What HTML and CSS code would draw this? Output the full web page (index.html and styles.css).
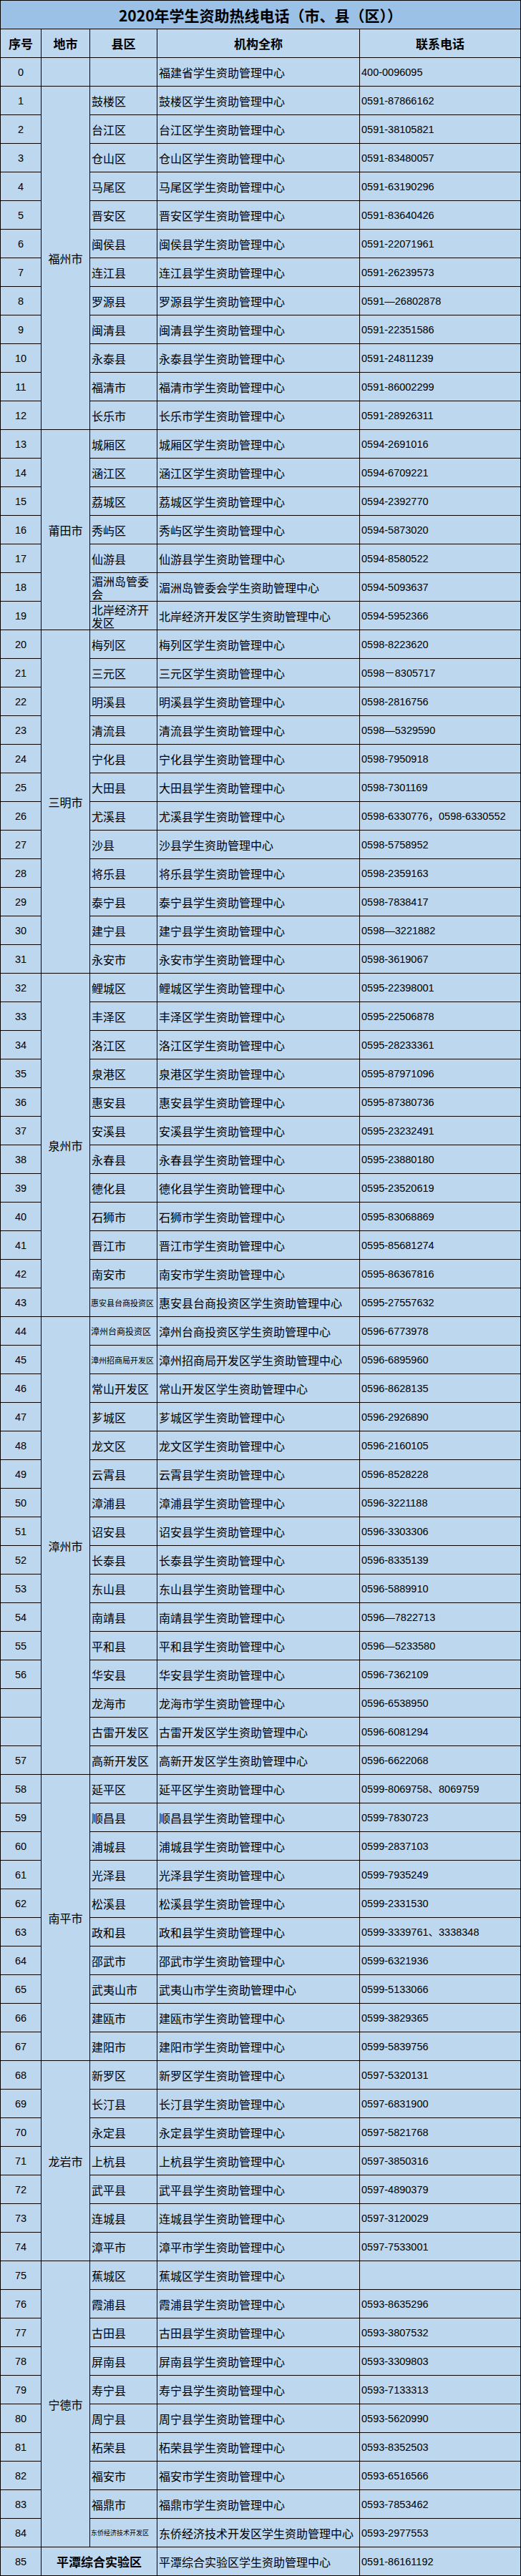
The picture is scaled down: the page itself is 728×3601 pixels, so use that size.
FILE: index.html
```html
<!DOCTYPE html>
<html lang="zh-CN">
<head>
<meta charset="utf-8">
<title>2020年学生资助热线电话</title>
<link rel="stylesheet" href="styles.css">
</head>
<body>
<table class="sheet">
<colgroup>
<col class="w-seq"><col class="w-city"><col class="w-cty"><col class="w-org"><col class="w-tel">
</colgroup>
<thead>
<tr><th colspan="5" class="title">2020年学生资助热线电话（市、县（区））</th></tr>
<tr><th class="head">序号</th><th class="head">地市</th><th class="head">县区</th><th class="head">机构全称</th><th class="head">联系电话</th></tr>
</thead>
<tbody>
<tr><td class="n">0</td><td class="city"></td><td class="cty"></td><td class="org">福建省学生资助管理中心</td><td class="tel">400-0096095</td></tr>

<tr><td class="n">1</td><td class="city" rowspan="12">福州市</td><td class="cty">鼓楼区</td><td class="org">鼓楼区学生资助管理中心</td><td class="tel">0591-87866162</td></tr>
<tr><td class="n">2</td><td class="cty">台江区</td><td class="org">台江区学生资助管理中心</td><td class="tel">0591-38105821</td></tr>
<tr><td class="n">3</td><td class="cty">仓山区</td><td class="org">仓山区学生资助管理中心</td><td class="tel">0591-83480057</td></tr>
<tr><td class="n">4</td><td class="cty">马尾区</td><td class="org">马尾区学生资助管理中心</td><td class="tel">0591-63190296</td></tr>
<tr><td class="n">5</td><td class="cty">晋安区</td><td class="org">晋安区学生资助管理中心</td><td class="tel">0591-83640426</td></tr>
<tr><td class="n">6</td><td class="cty">闽侯县</td><td class="org">闽侯县学生资助管理中心</td><td class="tel">0591-22071961</td></tr>
<tr><td class="n">7</td><td class="cty">连江县</td><td class="org">连江县学生资助管理中心</td><td class="tel">0591-26239573</td></tr>
<tr><td class="n">8</td><td class="cty">罗源县</td><td class="org">罗源县学生资助管理中心</td><td class="tel">0591—26802878</td></tr>
<tr><td class="n">9</td><td class="cty">闽清县</td><td class="org">闽清县学生资助管理中心</td><td class="tel">0591-22351586</td></tr>
<tr><td class="n">10</td><td class="cty">永泰县</td><td class="org">永泰县学生资助管理中心</td><td class="tel">0591-24811239</td></tr>
<tr><td class="n">11</td><td class="cty">福清市</td><td class="org">福清市学生资助管理中心</td><td class="tel">0591-86002299</td></tr>
<tr><td class="n">12</td><td class="cty">长乐市</td><td class="org">长乐市学生资助管理中心</td><td class="tel">0591-28926311</td></tr>

<tr><td class="n">13</td><td class="city" rowspan="7">莆田市</td><td class="cty">城厢区</td><td class="org">城厢区学生资助管理中心</td><td class="tel">0594-2691016</td></tr>
<tr><td class="n">14</td><td class="cty">涵江区</td><td class="org">涵江区学生资助管理中心</td><td class="tel">0594-6709221</td></tr>
<tr><td class="n">15</td><td class="cty">荔城区</td><td class="org">荔城区学生资助管理中心</td><td class="tel">0594-2392770</td></tr>
<tr><td class="n">16</td><td class="cty">秀屿区</td><td class="org">秀屿区学生资助管理中心</td><td class="tel">0594-5873020</td></tr>
<tr><td class="n">17</td><td class="cty">仙游县</td><td class="org">仙游县学生资助管理中心</td><td class="tel">0594-8580522</td></tr>
<tr><td class="n">18</td><td class="cty">湄洲岛管委会</td><td class="org">湄洲岛管委会学生资助管理中心</td><td class="tel">0594-5093637</td></tr>
<tr><td class="n">19</td><td class="cty">北岸经济开发区</td><td class="org">北岸经济开发区学生资助管理中心</td><td class="tel">0594-5952366</td></tr>

<tr><td class="n">20</td><td class="city" rowspan="12">三明市</td><td class="cty">梅列区</td><td class="org">梅列区学生资助管理中心</td><td class="tel">0598-8223620</td></tr>
<tr><td class="n">21</td><td class="cty">三元区</td><td class="org">三元区学生资助管理中心</td><td class="tel">0598－8305717</td></tr>
<tr><td class="n">22</td><td class="cty">明溪县</td><td class="org">明溪县学生资助管理中心</td><td class="tel">0598-2816756</td></tr>
<tr><td class="n">23</td><td class="cty">清流县</td><td class="org">清流县学生资助管理中心</td><td class="tel">0598—5329590</td></tr>
<tr><td class="n">24</td><td class="cty">宁化县</td><td class="org">宁化县学生资助管理中心</td><td class="tel">0598-7950918</td></tr>
<tr><td class="n">25</td><td class="cty">大田县</td><td class="org">大田县学生资助管理中心</td><td class="tel">0598-7301169</td></tr>
<tr><td class="n">26</td><td class="cty">尤溪县</td><td class="org">尤溪县学生资助管理中心</td><td class="tel">0598-6330776，0598-6330552</td></tr>
<tr><td class="n">27</td><td class="cty">沙县</td><td class="org">沙县学生资助管理中心</td><td class="tel">0598-5758952</td></tr>
<tr><td class="n">28</td><td class="cty">将乐县</td><td class="org">将乐县学生资助管理中心</td><td class="tel">0598-2359163</td></tr>
<tr><td class="n">29</td><td class="cty">泰宁县</td><td class="org">泰宁县学生资助管理中心</td><td class="tel">0598-7838417</td></tr>
<tr><td class="n">30</td><td class="cty">建宁县</td><td class="org">建宁县学生资助管理中心</td><td class="tel">0598—3221882</td></tr>
<tr><td class="n">31</td><td class="cty">永安市</td><td class="org">永安市学生资助管理中心</td><td class="tel">0598-3619067</td></tr>

<tr><td class="n">32</td><td class="city" rowspan="12">泉州市</td><td class="cty">鲤城区</td><td class="org">鲤城区学生资助管理中心</td><td class="tel">0595-22398001</td></tr>
<tr><td class="n">33</td><td class="cty">丰泽区</td><td class="org">丰泽区学生资助管理中心</td><td class="tel">0595-22506878</td></tr>
<tr><td class="n">34</td><td class="cty">洛江区</td><td class="org">洛江区学生资助管理中心</td><td class="tel">0595-28233361</td></tr>
<tr><td class="n">35</td><td class="cty">泉港区</td><td class="org">泉港区学生资助管理中心</td><td class="tel">0595-87971096</td></tr>
<tr><td class="n">36</td><td class="cty">惠安县</td><td class="org">惠安县学生资助管理中心</td><td class="tel">0595-87380736</td></tr>
<tr><td class="n">37</td><td class="cty">安溪县</td><td class="org">安溪县学生资助管理中心</td><td class="tel">0595-23232491</td></tr>
<tr><td class="n">38</td><td class="cty">永春县</td><td class="org">永春县学生资助管理中心</td><td class="tel">0595-23880180</td></tr>
<tr><td class="n">39</td><td class="cty">德化县</td><td class="org">德化县学生资助管理中心</td><td class="tel">0595-23520619</td></tr>
<tr><td class="n">40</td><td class="cty">石狮市</td><td class="org">石狮市学生资助管理中心</td><td class="tel">0595-83068869</td></tr>
<tr><td class="n">41</td><td class="cty">晋江市</td><td class="org">晋江市学生资助管理中心</td><td class="tel">0595-85681274</td></tr>
<tr><td class="n">42</td><td class="cty">南安市</td><td class="org">南安市学生资助管理中心</td><td class="tel">0595-86367816</td></tr>
<tr><td class="n">43</td><td class="cty fs11">惠安县台商投资区</td><td class="org">惠安县台商投资区学生资助管理中心</td><td class="tel">0595-27557632</td></tr>

<tr><td class="n">44</td><td class="city" rowspan="16">漳州市</td><td class="cty fs12">漳州台商投资区</td><td class="org">漳州台商投资区学生资助管理中心</td><td class="tel">0596-6773978</td></tr>
<tr><td class="n">45</td><td class="cty fs11">漳州招商局开发区</td><td class="org">漳州招商局开发区学生资助管理中心</td><td class="tel">0596-6895960</td></tr>
<tr><td class="n">46</td><td class="cty">常山开发区</td><td class="org">常山开发区学生资助管理中心</td><td class="tel">0596-8628135</td></tr>
<tr><td class="n">47</td><td class="cty">芗城区</td><td class="org">芗城区学生资助管理中心</td><td class="tel">0596-2926890</td></tr>
<tr><td class="n">48</td><td class="cty">龙文区</td><td class="org">龙文区学生资助管理中心</td><td class="tel">0596-2160105</td></tr>
<tr><td class="n">49</td><td class="cty">云霄县</td><td class="org">云霄县学生资助管理中心</td><td class="tel">0596-8528228</td></tr>
<tr><td class="n">50</td><td class="cty">漳浦县</td><td class="org">漳浦县学生资助管理中心</td><td class="tel">0596-3221188</td></tr>
<tr><td class="n">51</td><td class="cty">诏安县</td><td class="org">诏安县学生资助管理中心</td><td class="tel">0596-3303306</td></tr>
<tr><td class="n">52</td><td class="cty">长泰县</td><td class="org">长泰县学生资助管理中心</td><td class="tel">0596-8335139</td></tr>
<tr><td class="n">53</td><td class="cty">东山县</td><td class="org">东山县学生资助管理中心</td><td class="tel">0596-5889910</td></tr>
<tr><td class="n">54</td><td class="cty">南靖县</td><td class="org">南靖县学生资助管理中心</td><td class="tel">0596—7822713</td></tr>
<tr><td class="n">55</td><td class="cty">平和县</td><td class="org">平和县学生资助管理中心</td><td class="tel">0596—5233580</td></tr>
<tr><td class="n">56</td><td class="cty">华安县</td><td class="org">华安县学生资助管理中心</td><td class="tel">0596-7362109</td></tr>
<tr><td class="n"></td><td class="cty">龙海市</td><td class="org">龙海市学生资助管理中心</td><td class="tel">0596-6538950</td></tr>
<tr><td class="n"></td><td class="cty">古雷开发区</td><td class="org">古雷开发区学生资助管理中心</td><td class="tel">0596-6081294</td></tr>
<tr><td class="n">57</td><td class="cty">高新开发区</td><td class="org">高新开发区学生资助管理中心</td><td class="tel">0596-6622068</td></tr>

<tr><td class="n">58</td><td class="city" rowspan="10">南平市</td><td class="cty">延平区</td><td class="org">延平区学生资助管理中心</td><td class="tel">0599-8069758、8069759</td></tr>
<tr><td class="n">59</td><td class="cty">顺昌县</td><td class="org">顺昌县学生资助管理中心</td><td class="tel">0599-7830723</td></tr>
<tr><td class="n">60</td><td class="cty">浦城县</td><td class="org">浦城县学生资助管理中心</td><td class="tel">0599-2837103</td></tr>
<tr><td class="n">61</td><td class="cty">光泽县</td><td class="org">光泽县学生资助管理中心</td><td class="tel">0599-7935249</td></tr>
<tr><td class="n">62</td><td class="cty">松溪县</td><td class="org">松溪县学生资助管理中心</td><td class="tel">0599-2331530</td></tr>
<tr><td class="n">63</td><td class="cty">政和县</td><td class="org">政和县学生资助管理中心</td><td class="tel">0599-3339761、3338348</td></tr>
<tr><td class="n">64</td><td class="cty">邵武市</td><td class="org">邵武市学生资助管理中心</td><td class="tel">0599-6321936</td></tr>
<tr><td class="n">65</td><td class="cty">武夷山市</td><td class="org">武夷山市学生资助管理中心</td><td class="tel">0599-5133066</td></tr>
<tr><td class="n">66</td><td class="cty">建瓯市</td><td class="org">建瓯市学生资助管理中心</td><td class="tel">0599-3829365</td></tr>
<tr><td class="n">67</td><td class="cty">建阳市</td><td class="org">建阳市学生资助管理中心</td><td class="tel">0599-5839756</td></tr>

<tr><td class="n">68</td><td class="city" rowspan="7">龙岩市</td><td class="cty">新罗区</td><td class="org">新罗区学生资助管理中心</td><td class="tel">0597-5320131</td></tr>
<tr><td class="n">69</td><td class="cty">长汀县</td><td class="org">长汀县学生资助管理中心</td><td class="tel">0597-6831900</td></tr>
<tr><td class="n">70</td><td class="cty">永定县</td><td class="org">永定县学生资助管理中心</td><td class="tel">0597-5821768</td></tr>
<tr><td class="n">71</td><td class="cty">上杭县</td><td class="org">上杭县学生资助管理中心</td><td class="tel">0597-3850316</td></tr>
<tr><td class="n">72</td><td class="cty">武平县</td><td class="org">武平县学生资助管理中心</td><td class="tel">0597-4890379</td></tr>
<tr><td class="n">73</td><td class="cty">连城县</td><td class="org">连城县学生资助管理中心</td><td class="tel">0597-3120029</td></tr>
<tr><td class="n">74</td><td class="cty">漳平市</td><td class="org">漳平市学生资助管理中心</td><td class="tel">0597-7533001</td></tr>

<tr><td class="n">75</td><td class="city" rowspan="10">宁德市</td><td class="cty">蕉城区</td><td class="org">蕉城区学生资助管理中心</td><td class="tel"></td></tr>
<tr><td class="n">76</td><td class="cty">霞浦县</td><td class="org">霞浦县学生资助管理中心</td><td class="tel">0593-8635296</td></tr>
<tr><td class="n">77</td><td class="cty">古田县</td><td class="org">古田县学生资助管理中心</td><td class="tel">0593-3807532</td></tr>
<tr><td class="n">78</td><td class="cty">屏南县</td><td class="org">屏南县学生资助管理中心</td><td class="tel">0593-3309803</td></tr>
<tr><td class="n">79</td><td class="cty">寿宁县</td><td class="org">寿宁县学生资助管理中心</td><td class="tel">0593-7133313</td></tr>
<tr><td class="n">80</td><td class="cty">周宁县</td><td class="org">周宁县学生资助管理中心</td><td class="tel">0593-5620990</td></tr>
<tr><td class="n">81</td><td class="cty">柘荣县</td><td class="org">柘荣县学生资助管理中心</td><td class="tel">0593-8352503</td></tr>
<tr><td class="n">82</td><td class="cty">福安市</td><td class="org">福安市学生资助管理中心</td><td class="tel">0593-6516566</td></tr>
<tr><td class="n">83</td><td class="cty">福鼎市</td><td class="org">福鼎市学生资助管理中心</td><td class="tel">0593-7853462</td></tr>
<tr><td class="n">84</td><td class="cty fs9">东侨经济技术开发区</td><td class="org">东侨经济技术开发区学生资助管理中心</td><td class="tel">0593-2977553</td></tr>

<tr><td class="n">85</td><td class="zone" colspan="2">平潭综合实验区</td><td class="org">平潭综合实验区学生资助管理中心</td><td class="tel">0591-86161192</td></tr>
</tbody>
</table>
</body>
</html>
```

FILE: styles.css
```css
html, body {
  margin: 0;
  padding: 0;
  background: #ffffff;
}

.sheet {
  width: 728px;
  table-layout: fixed;
  border-collapse: separate;
  border-spacing: 1px;
  background: #000000;
}

.w-seq { width: 56px; }
.w-city { width: 67px; }
.w-cty { width: 93px; }
.w-org { width: 282px; }
.w-tel { width: 224px; }

.sheet th,
.sheet td {
  height: 39px;
  padding: 0 2px;
  background: #bdd7ee;
  color: #000000;
  font-family: "Noto Sans CJK SC", sans-serif;
  font-size: 16px;
  font-weight: 400;
  line-height: 18px;
  vertical-align: middle;
  text-align: left;
  overflow: hidden;
  box-sizing: border-box;
}

.sheet .title {
  background: #9bc2e6;
  text-align: center;
  font-size: 21px;
  font-weight: 700;
  line-height: 24px;
}

.sheet .head {
  text-align: center;
  font-size: 17px;
  font-weight: 700;
}

.sheet .n {
  text-align: center;
  font-family: "Liberation Sans", "Noto Sans CJK SC", sans-serif;
  font-size: 14.5px;
}

.sheet .city {
  text-align: center;
}

.sheet .tel {
  font-family: "Liberation Sans", "Noto Sans CJK SC", sans-serif;
  font-size: 14.5px;
  white-space: nowrap;
}

.sheet .fs12 { font-size: 12px; white-space: nowrap; padding: 0 1px; }
.sheet .fs11 { font-size: 11px; white-space: nowrap; padding: 0 1px; }
.sheet .fs9 { font-size: 9px; white-space: nowrap; padding: 0 1px; }

.sheet .zone {
  text-align: center;
  font-size: 17px;
  font-weight: 700;
}
```
